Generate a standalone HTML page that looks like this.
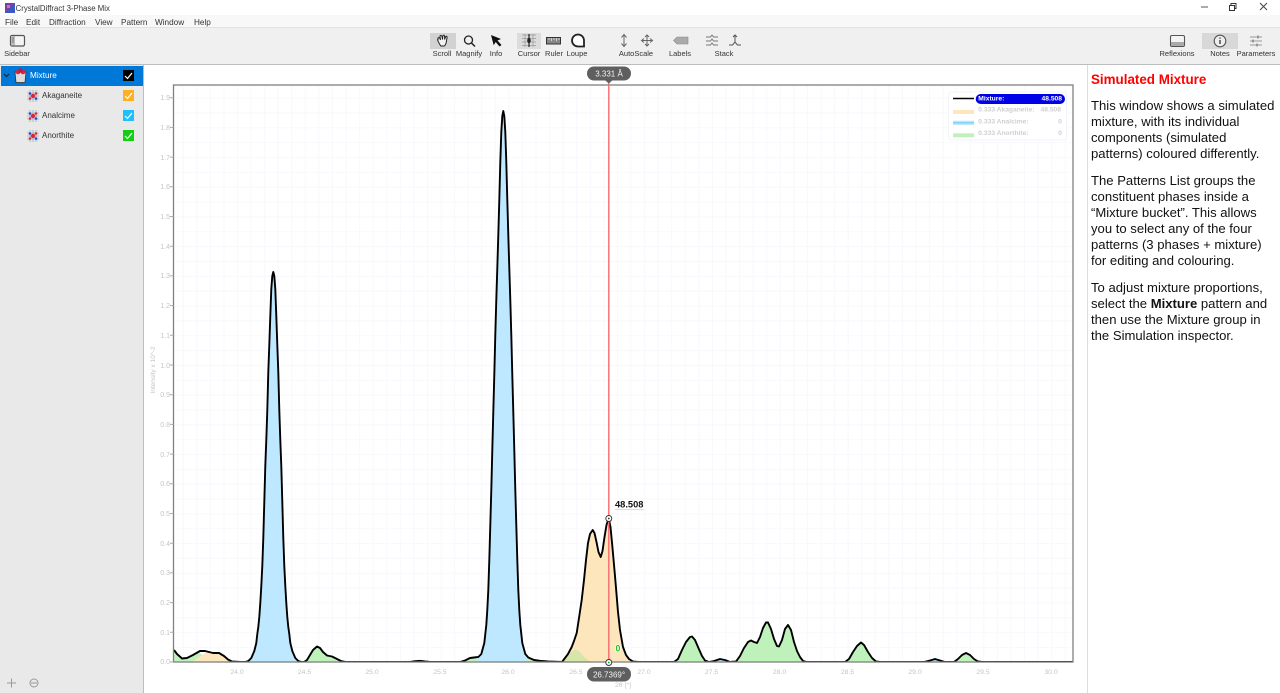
<!DOCTYPE html>
<html><head><meta charset="utf-8"><title>CrystalDiffract 3-Phase Mix</title>
<style>
html,body{margin:0;padding:0;background:#fff;width:1280px;height:693px;overflow:hidden;font-family:"Liberation Sans",sans-serif;color:#222}
div,span{position:absolute}
.m{top:16.500px;font-size:8.200px;line-height:11px;color:#333;white-space:nowrap;filter:blur(.25px)}
.l{top:49px;font-size:7.500px;line-height:10px;color:#333;transform:translateX(-50%);white-space:nowrap;filter:blur(.25px)}
.n{left:42px;font-size:8px;line-height:12px;color:#333;filter:blur(.25px)}
.c{left:123px;width:11px;height:11px}
.c svg{position:absolute;left:0;top:0}
#notes{left:1091px;top:72px;width:189px;font-size:13.100px;line-height:16px;color:#111;white-space:nowrap}
#notes p{margin:0 0 11px 0}
#notes h1{margin:0 0 9.500px 0;font-size:13.400px;line-height:16px;color:#f00;font-weight:bold}
svg text{font-family:"Liberation Sans",sans-serif}
#main{filter:blur(.3px)}
</style></head><body>
<div style="left:0;top:15px;width:1280px;height:12px;background:#f8f8f8"></div>
<div style="left:0;top:27px;width:1280px;height:1px;background:#e2e2e2"></div>
<div style="left:0;top:28px;width:1280px;height:36px;background:#f0f0f0"></div>
<div style="left:0;top:64px;width:1280px;height:1px;background:#bdbdbd"></div>
<div style="left:0;top:65px;width:143px;height:628px;background:#e9e9e9"></div>
<div style="left:143px;top:65px;width:1px;height:628px;background:#bdbdbd"></div>
<div style="left:1087px;top:65px;width:1px;height:628px;background:#dcdcdc"></div>

<div style="left:15.600px;top:2.500px;font-size:7.800px;line-height:12px;color:#333;white-space:nowrap;filter:blur(.25px)">CrystalDiffract 3-Phase Mix</div>
<span class="m" style="left:5px">File</span><span class="m" style="left:26px">Edit</span><span class="m" style="left:49px">Diffraction</span><span class="m" style="left:95px">View</span><span class="m" style="left:121px">Pattern</span><span class="m" style="left:155px">Window</span><span class="m" style="left:194px">Help</span>

<div style="left:430px;top:33px;width:26px;height:16px;background:#d2d2d2"></div>
<div style="left:517px;top:33px;width:24px;height:16px;background:#dcdcdc"></div>
<div style="left:1202px;top:33px;width:36px;height:16px;background:#d8d8d8"></div>

<span class="l" style="left:17px">Sidebar</span><span class="l" style="left:442px">Scroll</span><span class="l" style="left:469px">Magnify</span><span class="l" style="left:496px">Info</span><span class="l" style="left:529px">Cursor</span><span class="l" style="left:554px">Ruler</span><span class="l" style="left:577px">Loupe</span><span class="l" style="left:636px">AutoScale</span><span class="l" style="left:680px">Labels</span><span class="l" style="left:724px">Stack</span><span class="l" style="left:1177px">Reflexions</span><span class="l" style="left:1220px">Notes</span><span class="l" style="left:1256px">Parameters</span>

<div style="left:1px;top:66px;width:142px;height:20px;background:#0078d7"></div>
<div style="left:30px;top:70px;font-size:8.200px;line-height:12px;color:#fff">Mixture</div>
<span class="n" style="top:90px">Akaganeite</span><span class="n" style="top:110px">Analcime</span><span class="n" style="top:130px">Anorthite</span>
<div class="c" style="top:70px;background:#000"><svg width="11" height="11"><path d="M2 6l2.500 2.500L9 3" fill="none" stroke="#fff" stroke-width="1.200"/></svg></div>
<div class="c" style="top:90px;background:#fdb022"><svg width="11" height="11"><path d="M2 6l2.500 2.500L9 3" fill="none" stroke="#fff" stroke-width="1.200"/></svg></div>
<div class="c" style="top:110px;background:#1cc0ff"><svg width="11" height="11"><path d="M2 6l2.500 2.500L9 3" fill="none" stroke="#fff" stroke-width="1.200"/></svg></div>
<div class="c" style="top:130px;background:#10d010"><svg width="11" height="11"><path d="M2 6l2.500 2.500L9 3" fill="none" stroke="#fff" stroke-width="1.200"/></svg></div>

<div id="notes">
<h1>Simulated Mixture</h1>
<p>This window shows a simulated<br>mixture, with its individual<br>components (simulated<br>patterns) coloured differently.</p>
<p>The Patterns List groups the<br>constituent phases inside a<br>“Mixture bucket”. This allows<br>you to select any of the four<br>patterns (3 phases + mixture)<br>for editing and colouring.</p>
<p>To adjust mixture proportions,<br>select the <b>Mixture</b> pattern and<br>then use the Mixture group in<br>the Simulation inspector.</p>
</div>

<svg id="main" width="1280" height="693" style="position:absolute;left:0;top:0" xmlns="http://www.w3.org/2000/svg">
<defs>
<pattern id="gv" patternUnits="userSpaceOnUse" x="237" y="0" width="13.570" height="10"><rect x="0" width="1" height="10" fill="#f8f8fd"/></pattern>
<pattern id="gh" patternUnits="userSpaceOnUse" x="0" y="67.900" width="10" height="14.850"><rect y="0" width="10" height="1" fill="#f8f8fd"/></pattern>
<clipPath id="cp"><rect x="174" y="80" width="899" height="581.500"/></clipPath>
<g id="pat"><rect x="0" y="0" width="12" height="12" fill="#dfe8e8"/><path d="M0 3h12M0 6h12M0 9h12M3 0v12M6 0v12M9 0v12" stroke="#8fa3a8" stroke-width=".6"/><circle cx="6" cy="6" r="2.200" fill="#d8263a"/><circle cx="3" cy="3.500" r="1.300" fill="#3a3ad0"/><circle cx="9" cy="3.500" r="1.300" fill="#d8263a"/><circle cx="3" cy="8.500" r="1.300" fill="#d8263a"/><circle cx="9" cy="8.500" r="1.300" fill="#3a3ad0"/></g>
</defs>

<!-- app icon -->
<rect x="5" y="3" width="10" height="10" fill="#7b3fa8"/><path d="M5 13L15 3V13Z" fill="#3b57c8"/><path d="M7 5h3v3H7z" fill="#e36a9a"/>

<!-- window controls -->
<path d="M1201 7h7" stroke="#555" stroke-width="1"/>
<rect x="1229.500" y="5.500" width="5" height="5" fill="none" stroke="#333"/><path d="M1231 5V3.500h5v5h-1.500" fill="none" stroke="#333"/>
<path d="M1260 3l7 7M1267 3l-7 7" stroke="#444" stroke-width="1"/>

<!-- sidebar icon -->
<rect x="10.500" y="35.500" width="14" height="10.500" rx="1.500" fill="#f4f4f4" stroke="#555" stroke-width="1.200"/><rect x="11" y="36" width="4" height="9.500" fill="#bbb"/><path d="M12 38h2M12 40h2M12 42h2" stroke="#666" stroke-width=".7"/>

<!-- scroll hand -->
<path d="M438 38c1-1 2 0 2.500 2l-.5-3.500c0-1.300 1.500-1.300 2 0l.5 3 .3-3.500c.2-1.200 1.700-1 1.800.2l0 3.300 1-2.700c.5-1 1.700-.5 1.500.6l-.8 4.500c-.3 2-.8 3.100-2 4.100h-3.500c-1-1.500-2.300-3.500-3-5.500-.3-1 0-1.800.2-1.500z" fill="#f2f2f2" stroke="#222" stroke-width="1"/>
<!-- magnify -->
<circle cx="468.500" cy="40" r="4" fill="none" stroke="#222" stroke-width="1.300"/><path d="M471.500 43l3.500 3.500" stroke="#222" stroke-width="1.500"/>
<!-- info arrow -->
<path d="M491 35l10 4-3.500 1.500 4 4.500-2 1.500-3.800-4.500-2 3.200z" fill="#111"/>
<!-- cursor -->
<path d="M522 35h14M522 38.500h14M522 42h14M522 45.500h14M525 34v13M533 34v13" stroke="#999" stroke-width=".7"/><path d="M529 34v13" stroke="#222" stroke-width="1.200"/><ellipse cx="529" cy="40.500" rx="1.800" ry="2.600" fill="#222"/>
<!-- ruler -->
<rect x="546.500" y="37.500" width="14" height="6.500" fill="#888" stroke="#333"/><path d="M549 38v2M551.500 38v3M554 38v2M556.500 38v3M559 38v2" stroke="#eee" stroke-width=".7"/>
<!-- loupe -->
<path d="M578 34.500a6 6 0 1 0 0 12h6v-6a6 6 0 0 0-6-6z" fill="#fff" stroke="#222" stroke-width="1.800"/>
<!-- autoscale -->
<path d="M624 35v11M621.500 37.500l2.500-3 2.500 3M621.500 43.500l2.500 3 2.500-3" fill="none" stroke="#666" stroke-width="1"/>
<path d="M647 35v11M641.500 40.500h11M645 37l2-2 2 2M645 44l2 2 2-2M644 38.500l-2.500 2 2.500 2M650 38.500l2.500 2-2.500 2" fill="none" stroke="#666" stroke-width="1"/>
<!-- labels -->
<path d="M677 37h11v7h-11l-3.500-3.500z" fill="#aaa" stroke="#888" stroke-width=".6"/>
<!-- stack -->
<path d="M706 37h4.500l1.500-2 1.500 2h4.500M706 41h4.500l1.500-2 1.500 2h4.500M706 45h4.500l1.500-2 1.500 2h4.500" fill="none" stroke="#777" stroke-width=".9"/>
<path d="M729 45h3.500l2.500-3 2.500 3h3.500" fill="none" stroke="#555" stroke-width="1"/><path d="M735 35v7M733 37l2-2 2 2" fill="none" stroke="#555" stroke-width="1"/>
<!-- reflexions -->
<rect x="1170.500" y="35.500" width="14" height="11" rx="1.500" fill="#f4f4f4" stroke="#555" stroke-width="1.100"/><rect x="1171" y="42" width="13" height="4" fill="#aaa"/>
<!-- notes -->
<circle cx="1220" cy="41" r="5.800" fill="#eee" stroke="#555" stroke-width="1.100"/><path d="M1220 40v4M1220 37.500v1.300" stroke="#333" stroke-width="1.300"/>
<!-- parameters -->
<path d="M1250 37h12M1250 41h12M1250 45h12" stroke="#999" stroke-width="1"/><path d="M1258 35.500v3M1253 39.500v3M1257 43.500v3" stroke="#777" stroke-width="1.200"/>

<!-- tree -->
<path d="M4 74l2.500 2.500L9 74" fill="none" stroke="#123" stroke-width="1"/>
<path d="M15 72h11l-1 10.500h-9z" fill="#ddd" stroke="#333" stroke-width=".8"/><circle cx="18" cy="72" r="2.300" fill="#d8263a"/><circle cx="23" cy="72" r="2.300" fill="#d8263a"/><circle cx="20.500" cy="70.500" r="2.300" fill="#b02050"/>
<use href="#pat" x="27" y="90"/><use href="#pat" x="27" y="110"/><use href="#pat" x="27" y="130"/>

<!-- sidebar bottom -->
<path d="M7 683h9M11.500 678.500v9" stroke="#999" stroke-width="1"/>
<circle cx="34" cy="683" r="4" fill="none" stroke="#999" stroke-width="1"/><path d="M31 683h6" stroke="#999" stroke-width="1"/>

<!-- plot -->
<rect x="174" y="86" width="899" height="576" fill="#fff"/>
<rect x="174" y="86" width="899" height="576" fill="url(#gv)"/>
<rect x="174" y="86" width="899" height="576" fill="url(#gh)"/>

<!-- fills -->
<path d="M174 662V650L177 654 182 658.500 187 658 193 655 198 652 205 657 214 662Z" fill="#bff2ba"/>
<path d="M192 662L198 658 204 654 207 652 209 652 213 653 219 653 224 656 228 659.500 232 661.500 240 662Z" fill="#fde5bc"/>
<path d="M245.300 662L248.300 661 251.300 658 254.300 651 256.300 643 257.300 634 258.300 627 259.300 617 260.300 603 261.300 586 262.300 566 263.300 538 264.300 502 265.300 466 266.300 440 267.300 410 268.300 372 269.300 345 270.300 316 271.300 289 272.300 276 273.300 272 274.300 276 275.300 289 276.300 316 277.300 345 278.300 372 279.300 410 280.300 440 281.300 466 282.300 502 283.300 538 284.300 566 285.300 586 286.300 603 287.300 617 288.300 627 289.300 634 290.300 643 292.300 651 295.300 658 298.300 661 301.300 662Z" fill="#bde8ff"/>
<path d="M304 662L307 660 310 655 313 650 317 646.500 320 648 323 652 327 655.500 332 656.500 337 659 341 661 346 662Z" fill="#bff2ba"/>
<path d="M460 662L465 660.500 470 658 474 657.500 477 659 480 662Z" fill="#bff2ba"/>
<path d="M476 662L478.300 657 481.300 654 484.300 643 486.300 625 487.300 610 488.300 590 489.300 560 490.300 525 491.300 490 492.300 450 493.300 412 494.300 375 495.300 335 496.300 300 497.300 268 498.300 235 499.300 200 500.300 162 501.300 132 502.300 116 503.300 111 504.300 116 505.300 132 506.300 162 507.300 200 508.300 235 509.300 268 510.300 300 511.300 335 512.300 375 513.300 412 514.300 450 515.300 490 516.300 525 517.300 560 518.300 590 519.300 610 520.300 625 522.300 643 525.300 654 528.300 657.500 531 662Z" fill="#bde8ff"/>
<path d="M525 662L528.300 657.500 534 660 540 660.800 548 662Z" fill="#bff2ba"/>
<path d="M562 662L565 658 568 654 571.700 647 574 641 576.700 633 579 618 581.700 600 584 580 586 560 588 543 590 534 592.700 530 594.500 533 596.500 542 598.500 552 600.700 557 602.500 551 604.500 537 606.500 525 608.700 518 610.500 527 612.500 548 615 576 618 612 620 630 623 647 626 655 629 659 633 661.500 638 662Z" fill="#fde5bc"/>
<path d="M563 662L566 658 570 653 575 649.500 579 651 584 657 591 662Z" fill="#d6e6a8"/>
<path d="M674 662L678 659 682 650 686 642 690 637 692 636.500 695 640 698 647 702 656 705 660.500 709 662Z" fill="#bff2ba"/>
<path d="M711 662L720 659 725 660 730 662Z" fill="#a9dcf0"/>
<path d="M736 662L740 656 744 648 748 642 751 640.500 754 642 757 643 760 637 763 628 766 622.500 768 622.500 771 629 774 639 777 646 779 646.500 782 640 785 629 788 625 791 630 794 642 797 651 800 657 803 661 807 662Z" fill="#bff2ba"/>
<path d="M845 662L849 659 853 652 857 646 861 642.500 864 645 868 652 872 658 876 661.500 880 662Z" fill="#bff2ba"/>
<path d="M924 662L930 660.500 935 659 940 660.500 945 662Z" fill="#a9dcf0"/>
<path d="M954 662L958 659 962 655 966 653 970 655 974 659 978 661.500 982 662Z" fill="#bff2ba"/>

<!-- mix curve -->
<g clip-path="url(#cp)">
<path fill="none" stroke="#000" stroke-width="1.900" stroke-linejoin="round" d="M174 650L177 654 182 658.500 187 658 193 655 200 651 205 651 209 652 213 653 219 653 224 656 228 659.500 232 661.500 240 662 245.300 662 248.300 661 251.300 658 254.300 651 256.300 643 257.300 634 258.300 627 259.300 617 260.300 603 261.300 586 262.300 566 263.300 538 264.300 502 265.300 466 266.300 440 267.300 410 268.300 372 269.300 345 270.300 316 271.300 289 272.300 276 273.300 272 274.300 276 275.300 289 276.300 316 277.300 345 278.300 372 279.300 410 280.300 440 281.300 466 282.300 502 283.300 538 284.300 566 285.300 586 286.300 603 287.300 617 288.300 627 289.300 634 290.300 643 292.300 651 295.300 658 298.300 661 301.300 662 304 662 307 660 310 655 313 650 317 646.500 320 648 323 652 327 655.500 332 656.500 337 659 341 661 346 662 410 662 415 661.200 420 660.800 425 661.500 430 662 460 662 465 660.500 470 658 474 657.500 478.300 657 481.300 654 484.300 643 486.300 625 487.300 610 488.300 590 489.300 560 490.300 525 491.300 490 492.300 450 493.300 412 494.300 375 495.300 335 496.300 300 497.300 268 498.300 235 499.300 200 500.300 162 501.300 132 502.300 116 503.300 111 504.300 116 505.300 132 506.300 162 507.300 200 508.300 235 509.300 268 510.300 300 511.300 335 512.300 375 513.300 412 514.300 450 515.300 490 516.300 525 517.300 560 518.300 590 519.300 610 520.300 625 522.300 643 525.300 654 528.300 657.500 534 660 540 660.800 548 661.500 562 662 565 658 568 654 571.700 647 574 641 576.700 633 579 618 581.700 600 584 580 586 560 588 543 590 534 592.700 530 594.500 533 596.500 542 598.500 552 600.700 557 602.500 551 604.500 537 606.500 525 608.700 518 610.500 527 612.500 548 615 576 618 612 620 630 623 647 626 655 629 659 633 661.500 638 662 674 662 678 659 682 650 686 642 690 637 692 636.500 695 640 698 647 702 656 705 660.500 709 662 714 661 720 659 725 660 730 662 736 661.500 740 656 744 648 748 642 751 640.500 754 642 757 643 760 637 763 628 766 622.500 768 622.500 771 629 774 639 777 646 779 646.500 782 640 785 629 788 625 791 630 794 642 797 651 800 657 803 661 807 662 845 662 849 659 853 652 857 646 861 642.500 864 645 868 652 872 658 876 661.500 880 662 924 662 930 660.500 935 659 940 660.500 945 662 954 662 958 659 962 655 966 653 970 655 974 659 978 661.500 982 662 1073 662"/>
</g>

<!-- axes frame -->
<rect x="173.500" y="85" width="899.500" height="577" fill="none" stroke="#808080" stroke-width="1.300"/>

<!-- y ticks -->
<g stroke="#aaa" stroke-width="1"><path d="M170 97.700h3.500M170 127.400h3.500M170 157.100h3.500M170 186.800h3.500M170 216.500h3.500M170 246.200h3.500M170 275.900h3.500M170 305.600h3.500M170 335.300h3.500M170 365h3.500M170 394.700h3.500M170 424.400h3.500M170 454.100h3.500M170 483.800h3.500M170 513.500h3.500M170 543.200h3.500M170 572.900h3.500M170 602.600h3.500M170 632.300h3.500M170 662h3.500"/></g>
<g font-size="7" fill="#c4c4c4" text-anchor="end">
<text x="170" y="100">1.9</text><text x="170" y="130">1.8</text><text x="170" y="160">1.7</text><text x="170" y="189">1.6</text><text x="170" y="219">1.5</text><text x="170" y="249">1.4</text><text x="170" y="278">1.3</text><text x="170" y="308">1.2</text><text x="170" y="338">1.1</text><text x="170" y="368">1.0</text><text x="170" y="397">0.9</text><text x="170" y="427">0.8</text><text x="170" y="457">0.7</text><text x="170" y="486">0.6</text><text x="170" y="516">0.5</text><text x="170" y="546">0.4</text><text x="170" y="575">0.3</text><text x="170" y="605">0.2</text><text x="170" y="635">0.1</text><text x="170" y="664">0.0</text>
</g>
<text transform="translate(155,370) rotate(-90)" font-size="6.500" fill="#c4c4c4" text-anchor="middle">Intensity x 10^-2</text>
<g font-size="6.800" fill="#c4c4c4" text-anchor="middle">
<text x="237" y="674">24.0</text><text x="304.500" y="674">24.5</text><text x="372" y="674">25.0</text><text x="440" y="674">25.5</text><text x="508" y="674">26.0</text><text x="576" y="674">26.5</text><text x="644" y="674">27.0</text><text x="711.500" y="674">27.5</text><text x="779.500" y="674">28.0</text><text x="847.500" y="674">28.5</text><text x="915" y="674">29.0</text><text x="983" y="674">29.5</text><text x="1051" y="674">30.0</text>
<text x="623" y="687">2θ [°]</text>
</g>

<!-- legend -->
<rect x="948.500" y="92" width="118" height="48" rx="3" fill="#fff" fill-opacity=".9" stroke="#f3f3fa"/>
<rect x="975.700" y="94" width="89.300" height="10" rx="5" fill="#0000e6"/>
<path d="M953 98.500h21" stroke="#000" stroke-width="1.500"/>
<rect x="953" y="110" width="21" height="4" fill="#fde5bc"/>
<rect x="953" y="120.700" width="21" height="4.300" fill="#bde8ff"/><path d="M953 122.800h21" stroke="#5cc0ee" stroke-width=".8"/>
<rect x="953" y="133.300" width="21" height="4" fill="#bff2ba"/>
<g font-size="6.700" font-weight="bold">
<text x="978.300" y="100.400" fill="#fff">Mixture:</text><text x="1062" y="100.400" fill="#fff" text-anchor="end">48.508</text>
<text x="978.300" y="111.700" fill="#cfcfcf">0.333 Akaganeite:</text><text x="1061" y="111.700" fill="#cfcfcf" text-anchor="end">48.508</text>
<text x="978.300" y="123.300" fill="#cfcfcf">0.333 Analcime:</text><text x="1062" y="123.300" fill="#cfcfcf" text-anchor="end">0</text>
<text x="978.300" y="135" fill="#cfcfcf">0.333 Anorthite:</text><text x="1062" y="135" fill="#cfcfcf" text-anchor="end">0</text>
</g>

<!-- cursor line -->
<path d="M608.800 78V662" stroke="#f86a6e" stroke-width="1.400"/>
<path d="M604.800 80h8l-4 3.500z" fill="#5f5f5f"/>
<rect x="587" y="66.500" width="44" height="14" rx="7" fill="#5f5f5f"/>
<text x="609" y="76.300" font-size="8" fill="#f4f4f4" text-anchor="middle">3.331 Å</text>
<rect x="587" y="667" width="44" height="14.500" rx="7" fill="#5f5f5f"/>
<text x="609" y="677.300" font-size="8" fill="#f4f4f4" text-anchor="middle">26.7369°</text>
<circle cx="608.800" cy="518.500" r="3" fill="#fff" stroke="#333" stroke-width=".9"/><circle cx="608.800" cy="518.500" r=".9" fill="#333"/>
<circle cx="608.800" cy="662.500" r="3" fill="#fff" stroke="#333" stroke-width=".9"/><circle cx="608.800" cy="662.500" r=".9" fill="#0a0"/>
<text x="615" y="507.500" font-size="9.300" font-weight="bold" fill="#111" stroke="#fff" stroke-width="1.500" paint-order="stroke">48.508</text>
<path d="M615 509.500h29" stroke="#bbb" stroke-width=".6"/>
<text x="615.500" y="651.300" font-size="8.800" font-weight="bold" fill="#18c818" stroke="#fff" stroke-width="1.500" paint-order="stroke">0</text>
</svg>
</body></html>
